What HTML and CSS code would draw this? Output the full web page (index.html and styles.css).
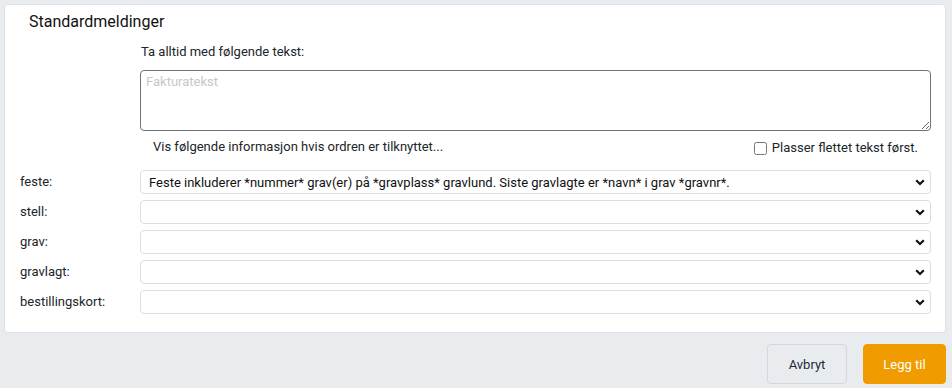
FILE: index.html
```html
<!DOCTYPE html>
<html lang="no">
<head>
<meta charset="utf-8">
<title>Standardmeldinger</title>
<link rel="stylesheet" href="styles.css">
</head>
<body>
<div class="page">
  <section class="card">
    <h2 class="title">Standardmeldinger</h2>
    <div class="grid">
      <div></div>
      <div class="top-block">
        <label class="field-label" for="fak">Ta alltid med følgende tekst:</label>
        <textarea id="fak" class="textarea" placeholder="Fakturatekst"></textarea>
        <div class="info-row">
          <span class="info">Vis følgende informasjon hvis ordren er tilknyttet...</span>
          <label class="check"><input type="checkbox" class="checkbox"> Plasser flettet tekst først.</label>
        </div>
      </div>

      <label class="row-label" for="s1">feste:</label>
      <select id="s1" class="select"><option>Feste inkluderer *nummer* grav(er) på *gravplass* gravlund. Siste gravlagte er *navn* i grav *gravnr*.</option></select>

      <label class="row-label" for="s2">stell:</label>
      <select id="s2" class="select"><option></option></select>

      <label class="row-label" for="s3">grav:</label>
      <select id="s3" class="select"><option></option></select>

      <label class="row-label" for="s4">gravlagt:</label>
      <select id="s4" class="select"><option></option></select>

      <label class="row-label" for="s5">bestillingskort:</label>
      <select id="s5" class="select"><option></option></select>
    </div>
  </section>
  <div class="actions">
    <button class="btn btn-cancel">Avbryt</button>
    <button class="btn btn-primary">Legg til</button>
  </div>
</div>
</body>
</html>
```

FILE: styles.css
```css
* { box-sizing: border-box; }
html, body { margin: 0; padding: 0; }
body {
  background: #e9ecef;
  font-family: Roboto, "Liberation Sans", Arial, sans-serif;
  color: #212529;
  font-size: 13px;
}
.page {
  padding: 4px 6px 0 4px;
}
.card {
  background: #fff;
  border: 1px solid #dee2e6;
  border-radius: 4px;
  padding: 7px 14px 18px 15px;
}
.title {
  margin: 0 0 0 9px;
  font-size: 16px;
  font-weight: 400;
  line-height: 20px;
  color: #111;
}
.grid {
  display: grid;
  grid-template-columns: 120px 1fr;
  row-gap: 6px;
  align-items: center;
}
.top-block {
  display: flex;
  flex-direction: column;
  padding-top: 12px;
  padding-bottom: 8px;
}
.field-label {
  line-height: 16px;
  margin-left: 1px;
  margin-bottom: 10px;
}
.textarea {
  display: block;
  width: 100%;
  height: 61px;
  border: 1px solid #6c757d;
  border-radius: 4px;
  padding: 3px 5px;
  font-family: inherit;
  font-size: 13px;
  line-height: 16px;
  color: #212529;
  resize: vertical;
}
.textarea::placeholder { color: #c4c8cc; }
.info-row {
  display: flex;
  justify-content: space-between;
  align-items: flex-start;
  margin-top: 8px;
  padding: 0 13px 0 13px;
  line-height: 16px;
}
.check {
  display: flex;
  align-items: center;
  gap: 5px;
  font-size: 13px;
  margin-top: 1px;
}
.checkbox {
  margin: 0;
  width: 13px;
  height: 13px;
}
.row-label {
  line-height: 16px;
}
.select {
  appearance: none;
  -webkit-appearance: none;
  width: 100%;
  height: 24px;
  border: 1px solid #dcdfe2;
  border-radius: 4px;
  background-color: #fff;
  background-image: url("data:image/svg+xml,%3Csvg xmlns='http://www.w3.org/2000/svg' viewBox='0 0 10 7'%3E%3Cpath d='M1.2 1.3 5 5 8.8 1.3' fill='none' stroke='%23111' stroke-width='2.2'/%3E%3C/svg%3E");
  background-repeat: no-repeat;
  background-position: right 5px center;
  background-size: 10px 7px;
  padding: 0 24px 0 8px;
  font-family: inherit;
  font-size: 13px;
  color: #111;
}
.actions {
  display: flex;
  justify-content: flex-end;
  gap: 16px;
  margin-top: 11px;
}
.btn {
  height: 40px;
  border-radius: 4px;
  font-family: inherit;
  font-size: 13px;
  padding: 0;
}
.btn-cancel {
  width: 80px;
  background: #e9ecef;
  border: 1px solid #d3d7db;
  color: #1d2a3a;
}
.btn-primary {
  width: 83px;
  background: #f09c00;
  border: 1px solid #f09c00;
  color: #fff;
}
```
